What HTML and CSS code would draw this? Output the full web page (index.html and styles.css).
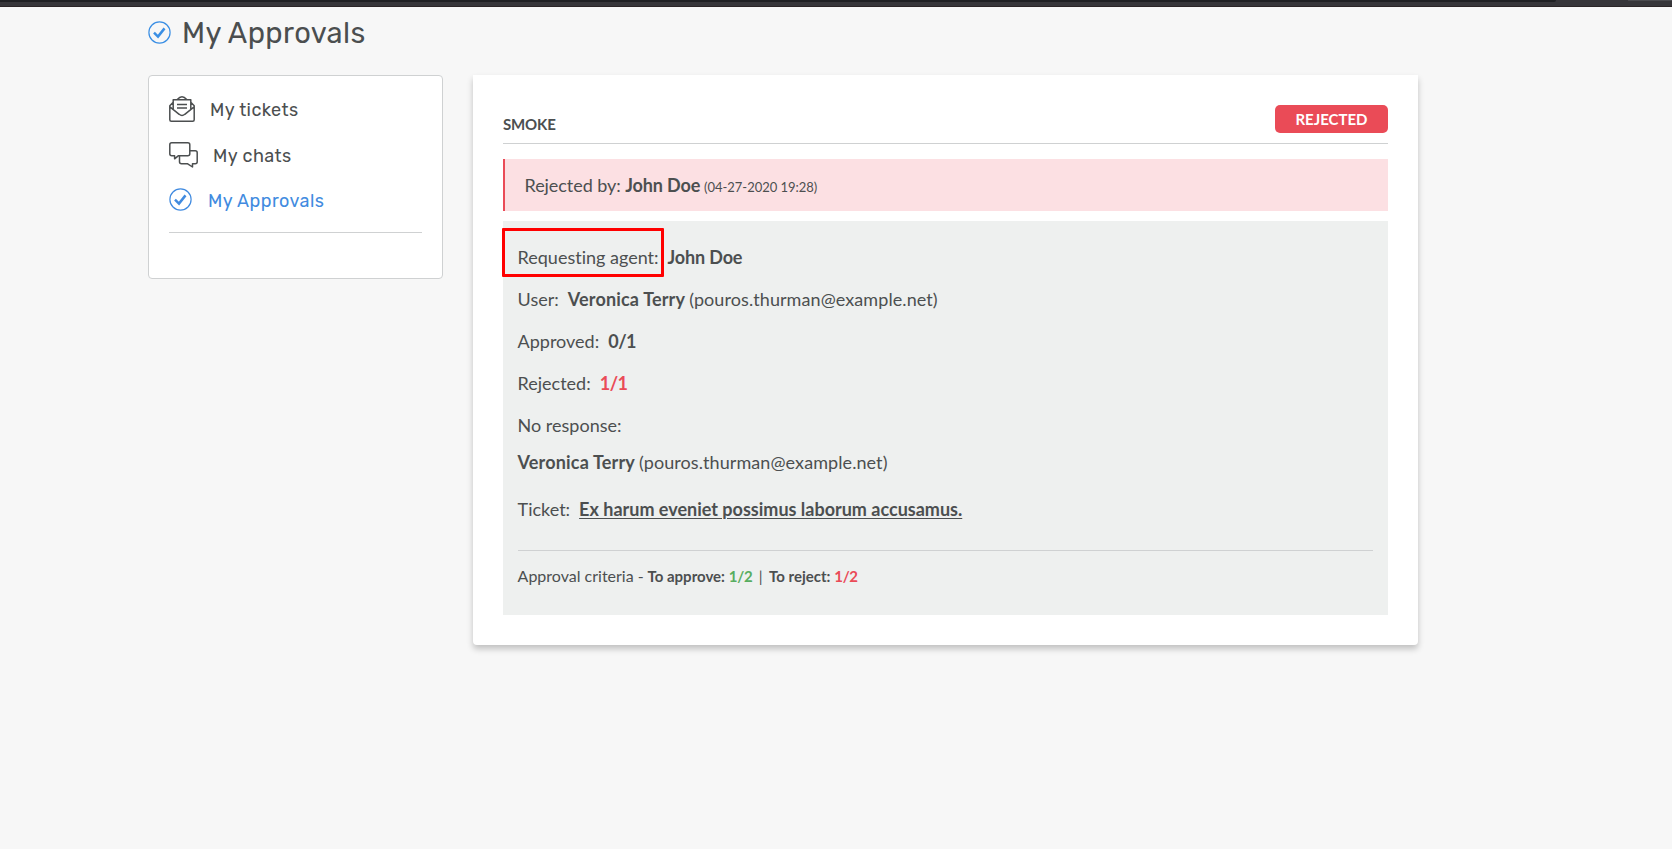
FILE: index.html
```html
<!DOCTYPE html>
<html lang="en">
<head>
<meta charset="utf-8">
<title>My Approvals</title>
<link rel="stylesheet" href="styles.css">
</head>
<body>
<svg class="sprite" width="0" height="0" aria-hidden="true">
  <symbol id="check" viewBox="0 0 23 23">
    <circle cx="11.5" cy="11.5" r="10.6" fill="none" stroke="currentColor" stroke-width="1.2"/>
    <path d="M6 11.7L10 15.6L16.5 7.4" fill="none" stroke="currentColor" stroke-width="2.5"/>
  </symbol>
</svg>
<div class="topbar"><div class="topbar-tab"></div><div class="topbar-end"></div></div>
<div class="page">
  <header class="title">
    <svg class="title-icon" width="23" height="23"><use href="#check"/></svg>
    <h1 class="title-text">My Approvals</h1>
  </header>
  <div class="columns">
    <nav class="sidebar">
      <a class="nav-item nav-tickets">
        <svg width="26" height="26" viewBox="0 0 26 26" fill="none" stroke="currentColor" stroke-width="1.5" stroke-linejoin="round">
          <path d="M4.2 13.5V3.8H21.8V13.5M8.3 3.6Q13-2 17.7 3.6M4.2 6.2L.8 9.7V23.7Q.8 25.2 2.3 25.2H23.7Q25.2 25.2 25.2 23.7V9.7L21.8 6.2M.9 10.8L10.2 18.3Q13 20.8 15.8 18.3L25.1 10.8M8 8.5H18M8 12H18"/>
        </svg>
        <span class="nav-label">My tickets</span>
      </a>
      <a class="nav-item nav-chats">
        <svg width="29" height="26" viewBox="0 0 29 26" fill="none" stroke="currentColor" stroke-width="1.5" stroke-linejoin="round">
          <path d="M2.7.8H18.8Q20.8.8 20.8 2.8V11.8Q20.8 13.8 18.8 13.8H9.2L5.6 16.8V13.8H2.8Q.8 13.8.8 11.8V2.8Q.8.8 2.7.8Z"/>
          <path d="M20.8 8.7H26.2Q28.2 8.7 28.2 10.7V19.8Q28.2 21.8 26.2 21.8H23.5V25L18.7 21.8H12.5Q10.5 21.8 10.5 19.8V13.8"/>
        </svg>
        <span class="nav-label">My chats</span>
      </a>
      <a class="nav-item nav-approvals">
        <svg width="23" height="23"><use href="#check"/></svg>
        <span class="nav-label">My Approvals</span>
      </a>
      <div class="nav-rule"></div>
    </nav>
    <main class="card">
      <div class="card-head">
        <h2 class="card-title">SMOKE</h2>
        <span class="badge">REJECTED</span>
      </div>
      <div class="alert"><span class="alert-by">Rejected by: <b class="agent">John Doe</b></span><span class="alert-date">(04-27-2020 19:28)</span></div>
      <section class="details">
        <div class="row"><span class="label label-marked">Requesting agent:</span><b class="agent">John Doe</b></div>
        <div class="row"><span class="label">User:</span><b class="user">Veronica Terry</b><span class="mail">(pouros.thurman@example.net)</span></div>
        <div class="row"><span class="label">Approved:</span><b class="count">0/1</b></div>
        <div class="row"><span class="label">Rejected:</span><b class="count red">1/1</b></div>
        <div class="row"><span class="label">No response:</span></div>
        <div class="row row-person"><b class="user">Veronica Terry</b><span class="mail">(pouros.thurman@example.net)</span></div>
        <div class="row row-ticket"><span class="label">Ticket:</span><b class="link">Ex harum eveniet possimus laborum accusamus.</b></div>
        <div class="criteria">
          <span><span class="criteria-label">Approval criteria -</span> <b>To approve:</b> <b class="ratio green">1/2</b></span><span class="bar">|</span><span><b>To reject:</b> <b class="ratio red">1/2</b></span>
        </div>
      </section>
    </main>
  </div>
</div>
</body>
</html>
```
FILE: styles.css
```css
*, *::after { box-sizing: border-box; }
body { margin: 0; min-height: 849px; background: #f7f7f7; color: #4c4f50; font-family: Lato, sans-serif; font-size: 18px; font-variant-ligatures: none; }
b { font-weight: 700; }
.sprite { display: block; }
.topbar { height: 7px; background: #37363a; border-bottom: 1px solid #2b2527; display: flex; justify-content: space-between; }
.topbar-tab { width: 1556px; height: 2px; background: #202124; border-radius: 0 0 4px 0; }
.topbar-end { width: 44px; height: 1px; background: #4b4b4f; }
.page { width: 1270px; margin-left: 148px; padding-bottom: 40px; }
.title { height: 68px; display: flex; align-items: flex-start; color: #4b4e4f; }
.title-icon { margin-top: 14px; color: #3b8fe4; }
.title-text { margin: 9px 0 0 11px; font: 400 29px/34px Rubik, Roboto, sans-serif; letter-spacing: .4px; }
.columns { display: flex; align-items: flex-start; gap: 30px; }
.sidebar { width: 295px; height: 204px; padding: 20px; background: #fff; border: 1px solid #cfd1d2; border-radius: 4px; font-family: Rubik, Roboto, sans-serif; }
.nav-item { display: flex; align-items: center; }
.nav-tickets { height: 26px; gap: 15px; }
.nav-chats { height: 26px; margin-top: 20px; gap: 15px; }
.nav-approvals { height: 23px; margin-top: 20px; gap: 16px; color: #418be0; }
.nav-label { letter-spacing: .45px; line-height: 23px; padding-top: 3px; }
.nav-rule { height: 1px; margin-top: 21px; background: #cfd1d2; }
.card { width: 945px; height: 570px; padding: 30px; background: #fff; border-radius: 0 0 4px 4px; box-shadow: 0 4px 6px rgba(0,0,0,.22); }
.card-head { height: 39px; display: flex; justify-content: space-between; align-items: flex-start; border-bottom: 1px solid #cfd1d2; }
.card-title { margin: 9px 0 0; font-size: 15px; line-height: 20px; font-weight: 700; letter-spacing: -.15px; }
.badge { width: 113px; height: 28px; border-radius: 5px; background: #ea4b57; color: #fff; font-size: 15px; line-height: 29px; font-weight: 700; text-align: center; }
.alert { height: 52px; margin-top: 15px; padding-left: 19.5px; border-left: 2px solid #ea4b57; background: #fce0e3; line-height: 52px; display: flex; gap: 4px; }
.alert-by { letter-spacing: -.05px; }
.alert-date { font-size: 13px; line-height: 56px; letter-spacing: -.03px; }
.agent { letter-spacing: -.15px; }
.user { letter-spacing: .17px; }
.count { letter-spacing: -.5px; }
.ratio { letter-spacing: -.3px; }
.details { height: 394px; margin-top: 10px; padding: 15px 15px 15px 14.6px; background: #eef0ef; }
.row { height: 42px; line-height: 42px; display: flex; white-space: nowrap; }
.label { margin-right: 9px; }
.label-marked { position: relative; }
.label-marked::after { content: ""; position: absolute; left: -15.6px; top: -8px; width: 162px; height: 49px; border: 3px solid #f00; border-radius: 1px; }
.mail { margin-left: 4px; letter-spacing: .08px; }
.row-person { margin-top: -5px; }
.row-ticket { margin-top: 5px; }
.link { text-decoration: underline; text-decoration-thickness: 1px; text-underline-offset: 2px; }
.criteria { margin-top: 20px; border-top: 1px solid #cfd1d2; font-size: 15px; line-height: 50px; display: flex; gap: 6.5px; }
.criteria-label { font-size: 16px; }
.red { color: #ea4b57; }
.green { color: #58ad60; }
```
